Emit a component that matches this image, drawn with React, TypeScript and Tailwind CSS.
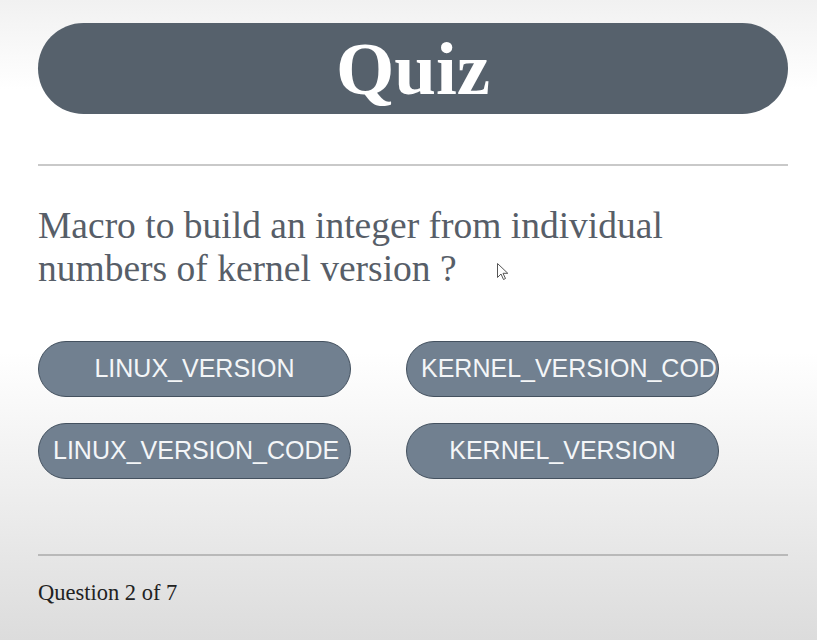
const options = [
  "LINUX_VERSION",
  "KERNEL_VERSION_CODE",
  "LINUX_VERSION_CODE",
  "KERNEL_VERSION",
];

function Cursor() {
  return (
    <svg
      className="absolute left-[496px] top-[262px]"
      width="14"
      height="20"
      viewBox="0 0 14 20"
      fill="white"
      stroke="#555"
      strokeWidth="1"
      aria-hidden="true"
    >
      <path d="M1.5 1.5v14l3.5-3.5 2.5 5.5 2-1-2.5-5.2h4.8z" />
    </svg>
  );
}

export default function App() {
  return (
    <div className="relative h-[640px] w-[817px] overflow-hidden bg-[linear-gradient(to_bottom,#f1f1f1_0%,#ffffff_14%,#ffffff_55%,#dcdcdc_100%)] pl-[38px] pt-[23px]">
      <div className="w-[750px]">
        <div className="flex h-[91px] items-center justify-center rounded-full bg-[#56616c]">
          <h1 className="font-['Liberation_Serif',serif] text-[75px] font-bold leading-none text-white">
            Quiz
          </h1>
        </div>

        <hr className="mt-[50px] border-t-2 border-[#c9c9c9]" />

        <p className="mt-[38px] font-['Liberation_Serif',serif] text-[37.5px] leading-[43px] text-[#575e68]">
          Macro to build an integer from individual
          <br />
          numbers of kernel version ?
        </p>

        <div className="mt-[51px] grid w-[680px] grid-cols-[313px_313px] gap-x-[55px] gap-y-[26px]">
          {options.map((opt) => (
            <button
              key={opt}
              className="h-[56px] overflow-hidden whitespace-nowrap rounded-full border border-[#44515f] bg-[#718090] px-[14px] text-center font-['Liberation_Sans',sans-serif] text-[25px] text-[#f4f6f8]"
            >
              {opt}
            </button>
          ))}
        </div>

        <hr className="mt-[75px] border-t-2 border-[#b9b9b9]" />

        <p className="mt-[20px] font-['Liberation_Serif',serif] text-[22.5px] text-[#222]">
          Question 2 of 7
        </p>
      </div>

      <Cursor />
    </div>
  );
}
